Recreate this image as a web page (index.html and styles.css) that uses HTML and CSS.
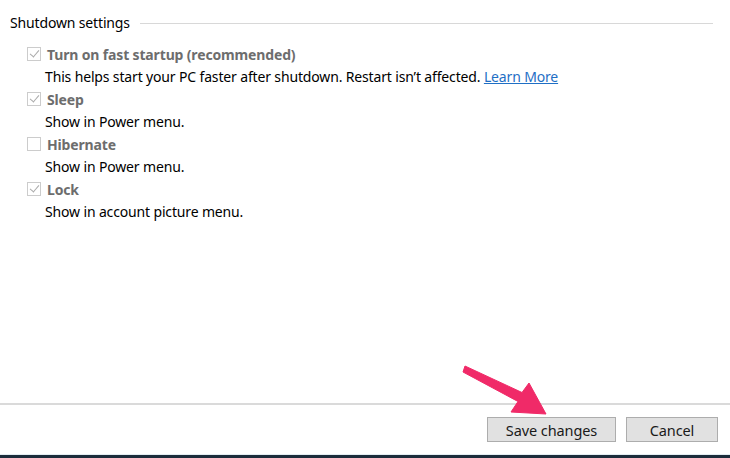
FILE: index.html
```html
<!DOCTYPE html>
<html>
<head>
<meta charset="utf-8">
<link rel="stylesheet" href="styles.css">
</head>
<body>
<div class="page">
  <div class="content">
    <div class="group-head">
      <span class="group-title">Shutdown settings</span>
      <span class="group-line"></span>
    </div>
    <div class="options">
      <div class="option">
        <div class="opt-label"><span class="cb checked"></span>Turn on fast startup (recommended)</div>
        <div class="opt-desc">This helps start your PC faster after shutdown. Restart isn’t affected. <a class="link" href="#">Learn More</a></div>
      </div>
      <div class="option">
        <div class="opt-label"><span class="cb checked"></span>Sleep</div>
        <div class="opt-desc">Show in Power menu.</div>
      </div>
      <div class="option">
        <div class="opt-label"><span class="cb"></span>Hibernate</div>
        <div class="opt-desc">Show in Power menu.</div>
      </div>
      <div class="option">
        <div class="opt-label"><span class="cb checked"></span>Lock</div>
        <div class="opt-desc">Show in account picture menu.</div>
      </div>
    </div>
  </div>
  <div class="footer">
    <button class="btn btn-save">Save changes</button>
    <button class="btn btn-cancel">Cancel</button>
  </div>
  <div class="taskbar"></div>
  <svg class="arrow" width="730" height="458" viewBox="0 0 730 458">
    <polygon points="465,366 522,392.5 529,383 546,414 511,412 518,401.5 463,372" fill="#f02a68" stroke="#f02a68" stroke-width="1" stroke-linejoin="round"/>
  </svg>
</div>
</body>
</html>
```
FILE: styles.css
```css
html, body {
  margin: 0;
  padding: 0;
  background: #ffffff;
}
body {
  font-family: "Noto Sans", "Open Sans", sans-serif;
  font-size: 14px;
  letter-spacing: -0.15px;
  color: #000000;
}
.page {
  position: relative;
  width: 730px;
  height: 458px;
  display: flex;
  flex-direction: column;
  overflow: hidden;
}
.content {
  flex: 1;
  padding: 13px 17px 0 10px;
}
.group-head {
  display: flex;
  align-items: center;
  height: 20px;
  gap: 10px;
}
.group-title {
  line-height: 20px;
  white-space: nowrap;
}
.group-line {
  flex: 1;
  border-top: 1px solid #d8d8d8;
  margin-top: 1px;
}
.options {
  margin-top: 10px;
  padding-left: 17px;
  display: flex;
  flex-direction: column;
  gap: 1px;
}
.opt-label {
  display: flex;
  align-items: center;
  height: 22px;
  font-weight: 700;
  color: #6d6d6d;
}
.cb {
  position: relative;
  box-sizing: border-box;
  width: 14px;
  height: 14px;
  border: 1px solid #cccccc;
  background: #ffffff;
  margin-right: 6px;
  flex: none;
}
.cb.checked::after {
  content: "";
  position: absolute;
  left: 4px;
  top: 0px;
  width: 4px;
  height: 8px;
  border-right: 1px solid #aaaaaa;
  border-bottom: 1px solid #aaaaaa;
  transform: rotate(40deg);
}
.opt-desc {
  height: 22px;
  line-height: 23px;
  padding-left: 18px;
  white-space: nowrap;
}
.link {
  color: #1f6fc5;
  text-decoration: underline;
}
.footer {
  height: 51px;
  border-top: 2px solid #dadada;
  display: flex;
  justify-content: flex-end;
  align-items: flex-start;
  gap: 10px;
  padding: 12px 12px 0 0;
  box-sizing: border-box;
}
.btn {
  height: 25px;
  box-sizing: border-box;
  border: 1px solid #adadad;
  background: #e1e1e1;
  font-family: inherit;
  font-size: 14.5px;
  letter-spacing: -0.1px;
  color: #1a1a1a;
  padding: 0;
}
.btn-save {
  width: 129px;
}
.btn-cancel {
  width: 92px;
}
.taskbar {
  height: 3px;
  border-top: 1px solid #e3edf2;
  background: #1c2c3b;
}
.arrow {
  position: absolute;
  left: 0;
  top: 0;
  pointer-events: none;
}
```
